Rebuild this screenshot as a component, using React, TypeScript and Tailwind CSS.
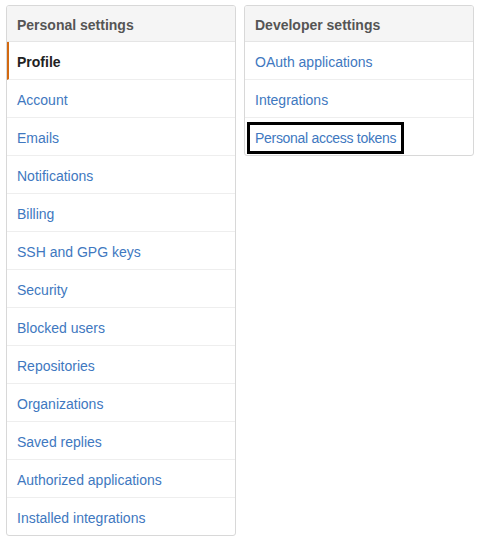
import React from 'react';

const personal = [
  'Account',
  'Emails',
  'Notifications',
  'Billing',
  'SSH and GPG keys',
  'Security',
  'Blocked users',
  'Repositories',
  'Organizations',
  'Saved replies',
  'Authorized applications',
  'Installed integrations',
];

export default function App() {
  return (
    <div
      className="w-[480px] h-[538px] bg-white flex items-start gap-2 pl-[6px] pt-[5px] text-[14px]"
      style={{ fontFamily: '"Liberation Sans", Arial, sans-serif' }}
    >
      {/* Personal settings */}
      <nav className="w-[230px] border border-[#d8d8d8] rounded-[3px] overflow-hidden">
        <div className="h-[36px] flex items-center pt-[4px] px-[10px] bg-[#f5f5f5] border-b border-[#e5e5e5] font-bold text-[#555]">
          Personal settings
        </div>
        <div className="h-[38px] flex items-center pt-[3px] pl-[8px] border-l-2 border-[#d26911] border-b border-b-[#eeeeee] font-bold text-[#222]">
          Profile
        </div>
        {personal.map((item, i) =>
          i < personal.length - 1 ? (
            <div
              key={item}
              className="h-[38px] flex items-center pt-[3px] px-[10px] border-b border-[#eeeeee] text-[#4078c0]"
            >
              {item}
            </div>
          ) : (
            <div key={item} className="h-[37px] flex items-center pt-[3px] px-[10px] text-[#4078c0]">
              {item}
            </div>
          )
        )}
      </nav>

      {/* Developer settings */}
      <nav className="w-[230px] border border-[#d8d8d8] rounded-[3px] overflow-hidden">
        <div className="h-[36px] flex items-center pt-[4px] px-[10px] bg-[#f5f5f5] border-b border-[#e5e5e5] font-bold text-[#555]">
          Developer settings
        </div>
        <div className="h-[38px] flex items-center pt-[3px] px-[10px] border-b border-[#eeeeee] text-[#4078c0]">
          OAuth applications
        </div>
        <div className="h-[38px] flex items-center pt-[3px] px-[10px] border-b border-[#eeeeee] text-[#4078c0]">
          Integrations
        </div>
        <div className="h-[37px] flex items-center pl-[2px] pt-[2px]">
          <span className="h-[32px] flex items-center border-[3px] border-black px-[5px] pt-[1px] text-[#4078c0] tracking-[-0.3px]">
            Personal access tokens
          </span>
        </div>
      </nav>
    </div>
  );
}
